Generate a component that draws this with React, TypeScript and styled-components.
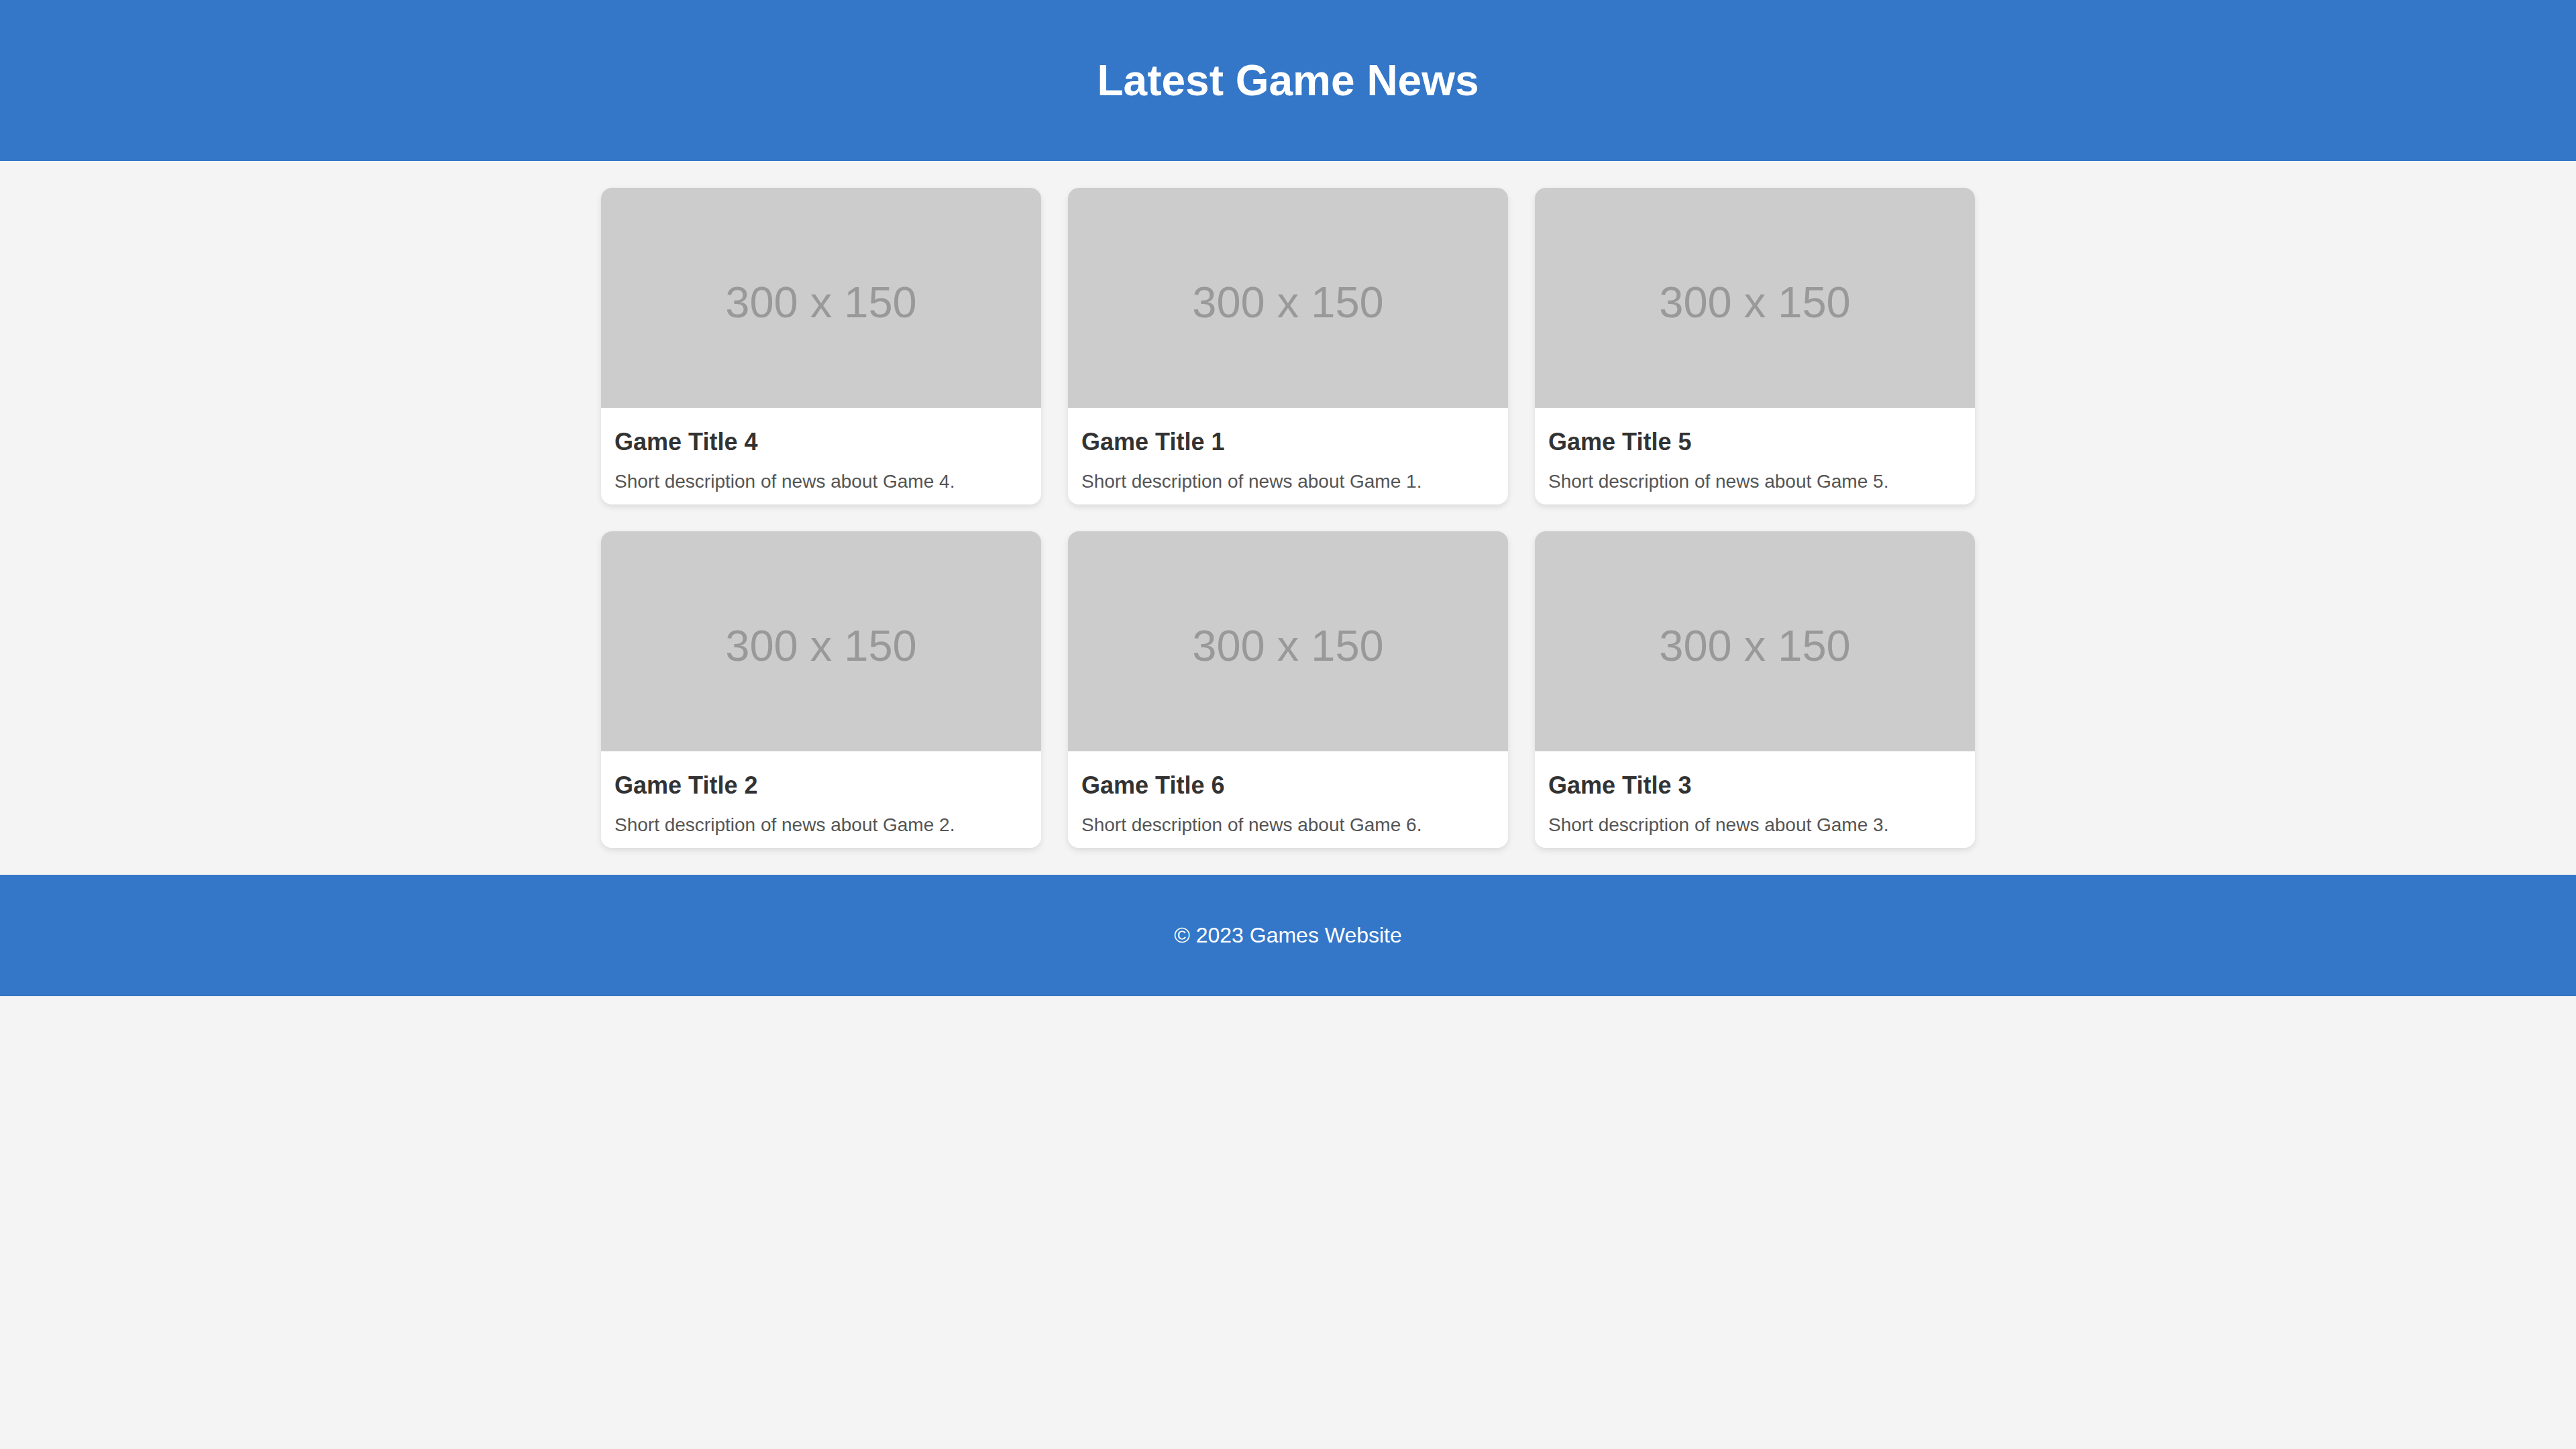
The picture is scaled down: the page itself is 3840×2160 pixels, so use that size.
import React from "react";
import styled, { createGlobalStyle } from "styled-components";

const GlobalStyle = createGlobalStyle`
  html, body {
    margin: 0;
    padding: 0;
    background: #f4f4f4;
    font-family: "Liberation Sans", Arial, Helvetica, sans-serif;
  }
  * { box-sizing: border-box; }
`;

const Header = styled.header`
  height: 240px;
  background: #3477c8;
  display: flex;
  align-items: center;
  justify-content: center;
`;

const Heading = styled.h1`
  margin: 0;
  color: #ffffff;
  font-size: 64px;
  font-weight: 700;
  line-height: normal;
`;

const Main = styled.main`
  padding: 40px 0;
  display: flex;
  justify-content: center;
`;

const Grid = styled.div`
  width: 2048px;
  display: grid;
  grid-template-columns: repeat(3, 1fr);
  gap: 40px;
`;

const Card = styled.article`
  background: #ffffff;
  border-radius: 16px;
  overflow: hidden;
  box-shadow: 0 4px 10px rgba(0, 0, 0, 0.1);
  display: flex;
  flex-direction: column;
`;

const Placeholder = styled.div`
  height: 328px;
  background: #cccccc;
  display: flex;
  align-items: center;
  justify-content: center;
  padding-top: 12px;
  color: #999999;
  font-size: 65px;
  font-family: "Liberation Sans", Arial, sans-serif;
  line-height: 1;
`;

const Body = styled.div`
  padding: 30px 20px 18px;
`;

const Title = styled.h3`
  margin: 0 0 22px;
  font-size: 36px;
  line-height: 42px;
  font-weight: 700;
  color: #333333;
`;

const Description = styled.p`
  margin: 0;
  font-size: 28px;
  line-height: 32px;
  color: #555555;
`;

const Footer = styled.footer`
  background: #3477c8;
  padding: 40px;
  text-align: center;
`;

const FooterText = styled.p`
  margin: 32px 0;
  color: #ffffff;
  font-size: 32px;
  line-height: normal;
`;

const games = [4, 1, 5, 2, 6, 3];

export default function App() {
  return (
    <>
      <GlobalStyle />
      <Header>
        <Heading>Latest Game News</Heading>
      </Header>
      <Main>
        <Grid>
          {games.map((n) => (
            <Card key={n}>
              <Placeholder>300 x 150</Placeholder>
              <Body>
                <Title>Game Title {n}</Title>
                <Description>Short description of news about Game {n}.</Description>
              </Body>
            </Card>
          ))}
        </Grid>
      </Main>
      <Footer>
        <FooterText>© 2023 Games Website</FooterText>
      </Footer>
    </>
  );
}
